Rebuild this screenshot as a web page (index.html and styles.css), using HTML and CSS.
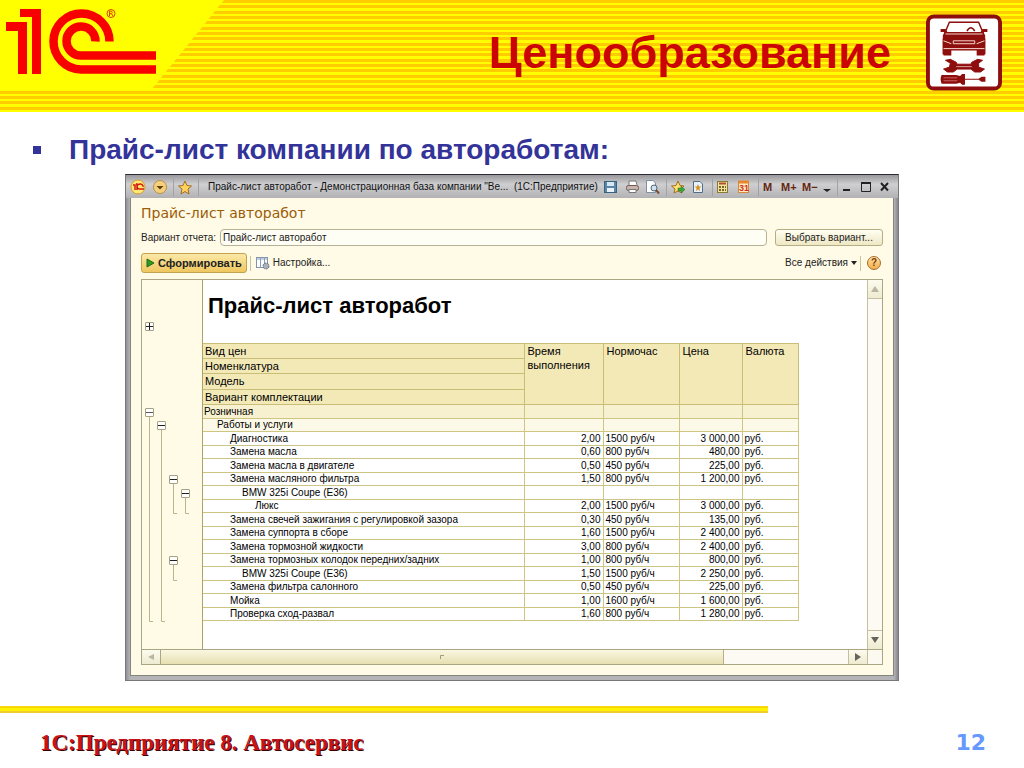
FILE: index.html
```html
<!DOCTYPE html>
<html lang="ru">
<head>
<meta charset="utf-8">
<title>Ценообразование</title>
<link rel="stylesheet" href="styles.css">
</head>
<body>
<div class="slide">
  <header class="banner">
    <svg class="logo" width="224" height="90" viewBox="0 0 224 90" role="img" aria-label="1С">
      <path d="M0 0H224L152 89H0Z" fill="#ff0"/>
      <g fill="#f80000">
        <path d="M20 9H41V74H32V17H20Z"/>
        <path d="M6 22H27V74H18V31H6Z"/>
      </g>
      <g fill="none" stroke="#f80000" stroke-width="8.500">
        <path d="M109.500 41.500A28 28 0 1 0 81 69.500H156"/>
        <path d="M95.500 41.500A14.500 14.500 0 1 0 81 55.500H156"/>
      </g>
      <g fill="none" stroke="#d84000" stroke-width="1">
        <circle cx="111" cy="13.500" r="4"/>
        <path d="M109.500 16V11.200H111.500Q113 12.500 111.500 13.700H110M111.500 13.700L113 16"/>
      </g>
    </svg>
    <h1 class="title">Ценообразование</h1>
    <svg class="badge" width="76" height="77" viewBox="0 0 78 78" role="img" aria-label="Автосервис">
      <rect x="2" y="2" width="74" height="74" rx="6" fill="#fff" stroke="#8e0d0d" stroke-width="4"/>
      <path d="M24 8H54L60 22H18Z" fill="#fff" stroke="#8e0d0d" stroke-width="1.500"/>
      <path d="M42 17Q46 10 50 17" fill="none" stroke="#8e0d0d" stroke-width="1.500"/>
      <path d="M15 15H20L22 18H56L58 15H63V18H59L61 25V41H60V42H52V37H26V42H18V41H17V25L19 18H15Z" fill="#8e0d0d"/>
      <path d="M20 20H58M18 27L26 30M60 27L52 30M28 27H50V30H28ZM18 35H60" fill="none" stroke="#f6dcd2" stroke-width="1"/>
      <path d="M20 47L25 46L31 49L32 51H46L47 49L53 46L58 47L54 50L54 54L60 56L56 59L50 59L46 56H32L28 59L22 59L18 56L24 54L25 50Z" fill="#8e0d0d" stroke="#8e0d0d" stroke-linejoin="round"/>
      <path d="M31 53.500H47" stroke="#d9a8a0" stroke-width="1"/>
      <path d="M16 62H31L35 63L37 61H40V66H54L57 64H61V69H57L54 67H40V72H37L35 70L31 71H16Q14 66 16 62Z" fill="#8e0d0d"/>
      <path d="M18 65H32M18 68H32" stroke="#c66" stroke-width="1"/>
    </svg>
  </header>

  <main class="body">
    <ul class="points"><li>Прайс-лист компании по автоработам:</li></ul>

    <section class="window">
      <div class="titlebar">
        <svg width="76" height="20" viewBox="0 0 76 20" aria-hidden="true">
          <circle cx="8" cy="10" r="7" fill="#ffe873" stroke="#d39b30"/>
          <path d="M3 8H5V13M6 7H7V13M13 10A3 2.500 0 1 0 10 12H14" fill="none" stroke="#d01b10" stroke-width="1.500"/>
          <circle cx="30" cy="10" r="6.500" fill="#f6cf7d" stroke="#b98f4a"/>
          <path d="M26.500 9H33.500L30 12.500Z" fill="#5b4010"/>
          <path d="M43.500 1V19M68.500 1V19" stroke="#a2a2a4"/>
          <path d="M55 4L57 8.500L61.500 9L58 12L59 17L55 14.500L51 17L52 12L48.500 9L53 8.500Z" fill="#ffd35c" stroke="#a36c21"/>
        </svg>
        <span class="caption">Прайс-лист авторабот - Демонстрационная база компании "Ве... &nbsp;(1С:Предприятие)</span>
        <svg class="commands" width="294" height="20" viewBox="0 0 294 20" aria-label="Команды окна" role="img">
          <rect x="4.500" y="4.500" width="12" height="11" fill="#5a87a8" stroke="#36617f"/>
          <rect x="7" y="5" width="7" height="4" fill="#d7e8f2"/><rect x="7" y="11" width="7" height="4" fill="#eaf2f7"/>
          <path d="M29 8V4H36L37 8" fill="#fff" stroke="#777"/>
          <rect x="26.500" y="8.500" width="12" height="5" rx="2" fill="#c9b3aa" stroke="#6d5952"/>
          <path d="M29 12.500H36V15.500H29Z" fill="#fff" stroke="#777"/>
          <path d="M46.500 3.500H53L55.500 6V15.500H46.500Z" fill="#fff" stroke="#7c90a4"/>
          <circle cx="54" cy="11" r="3" fill="#cfe2ee" stroke="#50667a"/><path d="M56 13L59 16.500" stroke="#784e36" stroke-width="2"/>
          <path d="M66.500 1V19M112.500 1V19M158.500 1V19M237.500 1V19" stroke="#a2a2a4"/>
          <path d="M78 4L80 8.500L84 9L81 12L82 16L78 14L74 16L75 12L71.500 9L76 8.500Z" fill="#ffe070" stroke="#a36c21"/>
          <path d="M78 11H81V9L85 12.500L81 16V14H78Z" fill="#3fa338" stroke="#24712a" stroke-width=".5"/>
          <path d="M93.500 4.500H100L102.500 7V15.500H93.500Z" fill="#e8f1f8" stroke="#526d88"/>
          <path d="M98 7L99 9.500H101.500L99.500 11L100 14L98 12.500L96 14L96.500 11L94.500 9.500H97Z" fill="#d69024"/>
          <rect x="117.500" y="4.500" width="10" height="11" fill="#efe4a2" stroke="#8b7a36"/>
          <path d="M119 6.500H126" stroke="#b05030" stroke-width="2"/><path d="M119 10H126M119 13H126" stroke="#7b6420" stroke-width="2" stroke-dasharray="2 1"/>
          <rect x="138.500" y="4.500" width="10" height="11" fill="#ffe9c2" stroke="#d08c3a"/>
          <path d="M138 5H149" stroke="#e4872e" stroke-width="3"/>
          <text class="day" x="139" y="14">31</text>
          <text class="mem" x="163" y="14">M</text>
          <text class="mem" x="181" y="14">M+</text>
          <text class="mem" x="202" y="14">M−</text>
          <path d="M223 12H231L227 15Z" fill="#222"/>
          <path d="M243 13H250" stroke="#222" stroke-width="2"/>
          <path d="M261.500 6V14.500H270.500V6" fill="none" stroke="#222"/><path d="M261 6H271" stroke="#222" stroke-width="2"/>
          <path d="M281 6L288 13.500M288 6L281 13.500" stroke="#222" stroke-width="2"/>
        </svg>
      </div>

      <div class="client">
        <h2 class="form-title">Прайс-лист авторабот</h2>
        <div class="variant">
          <label for="variant">Вариант отчета:</label>
          <input id="variant" type="text" value="Прайс-лист авторабот">
          <button class="choose" type="button">Выбрать вариант...</button>
        </div>
        <div class="tools">
          <button class="run" type="button"><svg width="9" height="10" viewBox="0 0 9 10" aria-hidden="true"><path d="M1 1L8 5L1 9Z" fill="#2f9a22" stroke="#1d6d18"/></svg>Сформировать</button>
          <span class="sep"></span>
          <button class="flat" type="button"><svg width="14" height="14" viewBox="0 0 14 14" aria-hidden="true"><rect x=".5" y="1.500" width="11" height="10" fill="#fff" stroke="#7f93ad"/><path d="M0 3H12M4.500 1V12M8.500 1V12" stroke="#8aa0bc"/><circle cx="10" cy="10" r="3" fill="#a9b1bd" stroke="#656d7b" stroke-dasharray="2 1"/></svg>Настройка...</button>
          <button class="flat all" type="button">Все действия<svg width="6" height="4" viewBox="0 0 6 4" aria-hidden="true"><path d="M0 0H6L3 4Z" fill="#222"/></svg></button>
          <span class="sep"></span>
          <button class="help" type="button">?</button>
        </div>

        <div class="report">
          <div class="sheet">
            <div class="tree">
              <svg width="60" height="369" viewBox="0 0 60 369" aria-hidden="true">
                <path d="M7.500 137V341.500H11M19.500 150V341.500H23M31.500 204V233.500H35M43.500 218V233.500H47M31.500 285V300.500H35" fill="none" stroke="#b8b48c"/>
              </svg>
              <button class="node n1" type="button" aria-label="Развернуть"><svg width="7" height="7" viewBox="0 0 7 7"><path d="M0 3.500H7M3.500 0V7" stroke="#222"/></svg></button>
              <button class="node n2" type="button" aria-label="Свернуть"><svg width="7" height="7" viewBox="0 0 7 7"><path d="M0 3.500H7" stroke="#555"/></svg></button>
              <button class="node n3" type="button" aria-label="Свернуть"><svg width="7" height="7" viewBox="0 0 7 7"><path d="M0 3.500H7" stroke="#222"/></svg></button>
              <button class="node n4" type="button" aria-label="Свернуть"><svg width="7" height="7" viewBox="0 0 7 7"><path d="M0 3.500H7" stroke="#222"/></svg></button>
              <button class="node n5" type="button" aria-label="Свернуть"><svg width="7" height="7" viewBox="0 0 7 7"><path d="M0 3.500H7" stroke="#222"/></svg></button>
              <button class="node n6" type="button" aria-label="Свернуть"><svg width="7" height="7" viewBox="0 0 7 7"><path d="M0 3.500H7" stroke="#222"/></svg></button>
            </div>
            <div class="page">
              <h3 class="report-title">Прайс-лист авторабот</h3>
              <table class="prices">
                <colgroup><col class="c-name"><col class="c-time"><col class="c-norm"><col class="c-price"><col class="c-cur"></colgroup>
                <thead>
                  <tr><th>Вид цен</th><th rowspan="4">Время<br>выполнения</th><th rowspan="4">Нормочас</th><th rowspan="4">Цена</th><th rowspan="4">Валюта</th></tr>
                  <tr><th>Номенклатура</th></tr>
                  <tr><th>Модель</th></tr>
                  <tr><th>Вариант комплектации</th></tr>
                </thead>
                <tbody>
                  <tr class="g1"><td class="l0">Розничная</td><td></td><td></td><td></td><td></td></tr>
                  <tr class="g2"><td class="l1">Работы и услуги</td><td></td><td></td><td></td><td></td></tr>
                  <tr><td class="l2">Диагностика</td><td>2,00</td><td>1500 руб/ч</td><td>3 000,00</td><td>руб.</td></tr>
                  <tr><td class="l2">Замена масла</td><td>0,60</td><td>800 руб/ч</td><td>480,00</td><td>руб.</td></tr>
                  <tr><td class="l2">Замена масла в двигателе</td><td>0,50</td><td>450 руб/ч</td><td>225,00</td><td>руб.</td></tr>
                  <tr><td class="l2">Замена масляного фильтра</td><td>1,50</td><td>800 руб/ч</td><td>1 200,00</td><td>руб.</td></tr>
                  <tr><td class="l3">BMW 325i Coupe (E36)</td><td></td><td></td><td></td><td></td></tr>
                  <tr><td class="l4">Люкс</td><td>2,00</td><td>1500 руб/ч</td><td>3 000,00</td><td>руб.</td></tr>
                  <tr><td class="l2">Замена свечей зажигания с регулировкой зазора</td><td>0,30</td><td>450 руб/ч</td><td>135,00</td><td>руб.</td></tr>
                  <tr><td class="l2">Замена суппорта в сборе</td><td>1,60</td><td>1500 руб/ч</td><td>2 400,00</td><td>руб.</td></tr>
                  <tr><td class="l2">Замена тормозной жидкости</td><td>3,00</td><td>800 руб/ч</td><td>2 400,00</td><td>руб.</td></tr>
                  <tr><td class="l2">Замена тормозных колодок передних/задних</td><td>1,00</td><td>800 руб/ч</td><td>800,00</td><td>руб.</td></tr>
                  <tr><td class="l3">BMW 325i Coupe (E36)</td><td>1,50</td><td>1500 руб/ч</td><td>2 250,00</td><td>руб.</td></tr>
                  <tr><td class="l2">Замена фильтра салонного</td><td>0,50</td><td>450 руб/ч</td><td>225,00</td><td>руб.</td></tr>
                  <tr><td class="l2">Мойка</td><td>1,00</td><td>1600 руб/ч</td><td>1 600,00</td><td>руб.</td></tr>
                  <tr><td class="l2">Проверка сход-развал</td><td>1,60</td><td>800 руб/ч</td><td>1 280,00</td><td>руб.</td></tr>
                </tbody>
              </table>
            </div>
            <div class="vscroll">
              <button class="arrow" type="button" aria-label="Вверх"><svg width="8" height="6" viewBox="0 0 8 6"><path d="M4 0L8 6H0Z" fill="#b9b6a2"/></svg></button>
              <button class="arrow" type="button" aria-label="Вниз"><svg width="8" height="6" viewBox="0 0 8 6"><path d="M0 0H8L4 6Z" fill="#66645c"/></svg></button>
            </div>
          </div>
          <div class="hscroll">
            <button class="arrow" type="button" aria-label="Влево"><svg width="6" height="8" viewBox="0 0 6 8"><path d="M6 1V7L0 4Z" fill="#b9b6a2"/></svg></button>
            <div class="track"><div class="thumb"><svg width="4" height="4" viewBox="0 0 4 4"><path d="M.5 4V.5H4" fill="none" stroke="#a39c72"/></svg></div></div>
            <button class="arrow" type="button" aria-label="Вправо"><svg width="6" height="8" viewBox="0 0 6 8"><path d="M0 0V8L6 4Z" fill="#66645c"/></svg></button>
            <span class="corner"></span>
          </div>
        </div>
      </div>
    </section>
  </main>

  <footer class="footer">
    <div class="rule"></div>
    <div class="foot-row">
      <span class="product">1С:Предприятие 8. Автосервис</span>
      <span class="number">12</span>
    </div>
  </footer>
</div>
</body>
</html>
```
FILE: styles.css
```css
* { box-sizing: border-box; }
body { margin: 0; background: #fff; font-family: "Liberation Sans", Arial, sans-serif; }
svg { display: block; flex: none; }
h1, h2, h3, ul { margin: 0; padding: 0; font-weight: normal; }
button, input { font: inherit; color: inherit; margin: 0; padding: 0; border: 0; background: none; }

.slide { min-height: 100vh; display: flex; flex-direction: column; }

.banner {
  display: flex;
  align-items: flex-start;
  height: 112px;
  padding-right: 22px;
  background: repeating-linear-gradient(#fc0 0 3px, #ff0 3px 5px, #fc0 5px 8px, #ff0 8px 11px, #fc0 11px 14px, #ff0 14px 16px);
}
.title { flex: 1; padding: 26px 35px 0 0; text-align: right; font-size: 45px; line-height: 54px; font-weight: bold; color: #cb0505; }
.badge { margin-top: 14px; }

.body { flex: 1; padding: 20px 125px 0; }
.points { list-style: none; margin-left: -92px; font-size: 28px; line-height: 36px; font-weight: bold; color: #339; }
.points li { display: flex; align-items: center; gap: 28px; }
.points li::before { content: ""; width: 8px; height: 8px; background: #339; }

.window { margin-top: 6px; border: 1px solid #77787c; border-top-color: #2c2c34; background: linear-gradient(90deg, #8f9196, #b4b4b6 4px, #b4b4b6 calc(100% - 4px), #85878c); padding: 0 4px 4px; font-size: 10px; line-height: 12px; color: #222; }
.titlebar { display: flex; align-items: center; height: 23px; margin: 0 -4px; padding: 0 4px; background: linear-gradient(#98989c, #cfcfd1 40%, #b2b2b5); }
.caption { flex: 1; margin-left: 2px; white-space: nowrap; color: #111; }
.day { font-size: 9px; font-weight: bold; fill: #d52f18; }
.mem { font-size: 11px; font-weight: bold; fill: #65260f; }

.client { padding: 6px 10px 10px; background: #fffbe6; border: 1px solid #85857f; border-width: 0 1px 1px; }
.form-title { font-family: "DejaVu Sans", sans-serif; font-size: 14px; line-height: 18px; color: #9d5c08; }
.variant { display: flex; align-items: center; margin-top: 7px; }
.variant input { flex: 1; min-width: 0; height: 17px; margin: 0 8px 0 4px; padding: 0 2px; border: 1px solid #b5b295; border-radius: 4px; background: #fffef4; }
.choose { height: 17px; width: 108px; border: 1px solid #b5ae84; border-radius: 3px; background: linear-gradient(#fffef2, #eee8c4); }
.tools { display: flex; align-items: center; margin-top: 7px; height: 20px; }
.run { display: flex; align-items: center; gap: 3px; height: 20px; padding: 0 4px; border: 1px solid #c3a24c; border-radius: 3px; background: linear-gradient(#fbe9a8, #efc75f); font-weight: bold; font-size: 11px; }
.sep { width: 1px; height: 15px; margin: 0 3px; background: #c9c29c; }
.flat { display: flex; align-items: center; gap: 3px; margin-left: 2px; }
.all { margin-left: auto; }
.help { width: 14px; height: 14px; margin: 0 2px 0 3px; border: 1px solid #a86c28; border-radius: 50%; background: linear-gradient(#ffe2a6, #f2ad4c); font-weight: bold; color: #7a3f08; }

.report { margin-top: 6px; border: 1px solid #a9a683; background: #fff; }
.sheet { display: flex; height: 369px; }
.tree { position: relative; width: 61px; flex: none; background: #fffbe6; border-right: 1px solid #a9a36c; }
.node { position: absolute; display: grid; place-items: center; width: 9px; height: 9px; border: 1px solid #a5a184; border-radius: 1px; background: #fff; }
.n1 { left: 3px; top: 42px; }
.n2 { left: 3px; top: 128px; }
.n3 { left: 15px; top: 141px; }
.n4 { left: 27px; top: 195px; }
.n5 { left: 39px; top: 209px; }
.n6 { left: 27px; top: 276px; }
.page { flex: 1; min-width: 0; overflow: hidden; color: #000; }
.report-title { padding: 13px 0 0 5px; height: 63px; font-size: 22px; line-height: 26px; font-weight: bold; }
.prices { table-layout: fixed; width: 595px; border-collapse: collapse; }
.c-name { width: 321px; }
.c-time { width: 79px; }
.c-norm { width: 76px; }
.c-price { width: 63px; }
.c-cur { width: 56px; }
.prices th, .prices td { padding: 0 2px; border: 1px solid #cfc583; text-align: left; white-space: nowrap; line-height: 12px; font-weight: normal; }
.prices tr > :first-child { border-left: 0; }
.prices th { height: 15px; background: #f3e9b7; border-color: #c9bd78; vertical-align: top; font-size: 11px; line-height: 14px; }
.prices tr:nth-child(3) th { height: 16px; }
.prices th[rowspan] { padding-left: 3px; }
.prices td { height: 14px; }
.prices tbody tr:nth-child(even) td { height: 13px; }
.prices td:nth-child(2), .prices td:nth-child(4) { text-align: right; }
.g1 { background: #f8f1d0; }
.g2 { background: #fdf9e8; }
.prices .l0 { padding-left: 1px; }
.prices .l1 { padding-left: 14px; }
.prices .l2 { padding-left: 27px; }
.prices .l3 { padding-left: 39px; }
.prices .l4 { padding-left: 52px; }

.vscroll { display: flex; flex-direction: column; justify-content: space-between; width: 15px; flex: none; border-left: 1px solid #c4c09f; background: #fcfaf3; }
.arrow { display: grid; place-items: center; flex: none; background: linear-gradient(#fdfbee, #eeebd0); }
.vscroll .arrow { height: 19px; border: solid #c4c09f; border-width: 0 0 1px; }
.vscroll .arrow:last-child { border-width: 1px 0 0; }
.hscroll { display: flex; height: 15px; border-top: 1px solid #a9a683; }
.hscroll .arrow { width: 19px; border-left: 1px solid #c4c09f; }
.hscroll .arrow:first-child { border-width: 0 1px 0 0; border-right: 1px solid #a9a683; }
.track { flex: 1; background: #fcfaf3; }
.thumb { display: grid; place-items: center; width: 82%; height: 100%; border-right: 1px solid #b5b088; background: linear-gradient(#faf7e2, #e6dfb0); }
.corner { width: 15px; border-left: 1px solid #c4c09f; background: #fcfaf0; }

.footer { min-height: 62px; }
.rule { width: 75%; height: 7px; background: linear-gradient(#f8d70c 0 2px, #fff200 2px 5px, #f0cc30 5px); }
.foot-row { display: flex; justify-content: space-between; align-items: center; padding: 16px 38px 0 40px; line-height: 28px; }
.product { font-family: "Liberation Serif", "Times New Roman", serif; font-size: 23px; font-weight: bold; color: #c81418; text-shadow: 1px 1px 0 #300; }
.number { font-family: "DejaVu Sans", sans-serif; font-size: 22px; font-weight: bold; color: #69f; }
```
